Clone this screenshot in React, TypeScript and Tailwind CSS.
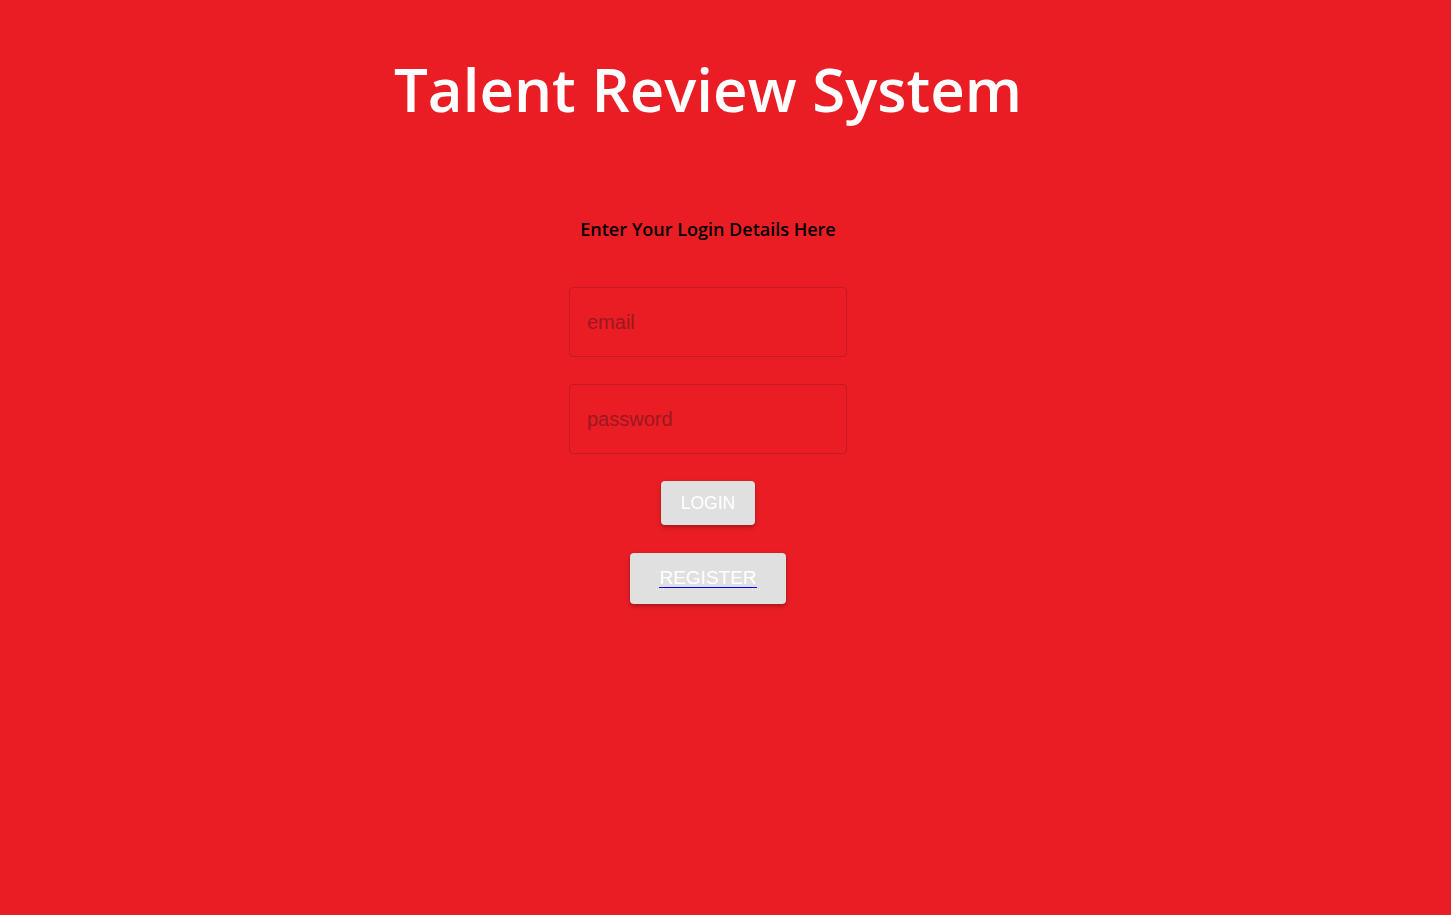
import React from "react";

const field =
  "w-[278px] h-[70px] rounded-[4px] border border-[#c41a22] bg-transparent px-[17px] text-[20px] font-['Liberation_Sans',Arial,sans-serif] outline-none placeholder:text-[#9c1820]";
const btn =
  "rounded-[4px] bg-[#e0e0e0] text-white font-['Liberation_Sans',Arial,sans-serif] shadow-[0_2px_4px_rgba(0,0,0,0.3)]";

export default function App() {
  return (
    <div className="min-h-[915px] w-full bg-[#ea1d24] font-['Open_Sans',sans-serif]">
      <div className="w-[1416px] flex flex-col items-center">
        <h1 className="mt-[46px] text-[60px] leading-[86px] text-white font-semibold">Talent Review System</h1>
        <p className="mt-[85px] text-[18px] leading-[24px] font-semibold text-black">Enter Your Login Details Here</p>
        <input className={`mt-[46px] ${field}`} placeholder="email" />
        <input className={`mt-[27px] ${field}`} placeholder="password" type="password" />
        <button className={`mt-[27px] w-[94px] h-[44px] text-[17.5px] ${btn}`}>LOGIN</button>
        <button className={`mt-[28px] flex items-center justify-center w-[156px] h-[51px] text-[19px] ${btn}`}>
          <span className="inline-block leading-[18px] border-b border-[#0000ee]">REGISTER</span>
        </button>
      </div>
    </div>
  );
}
